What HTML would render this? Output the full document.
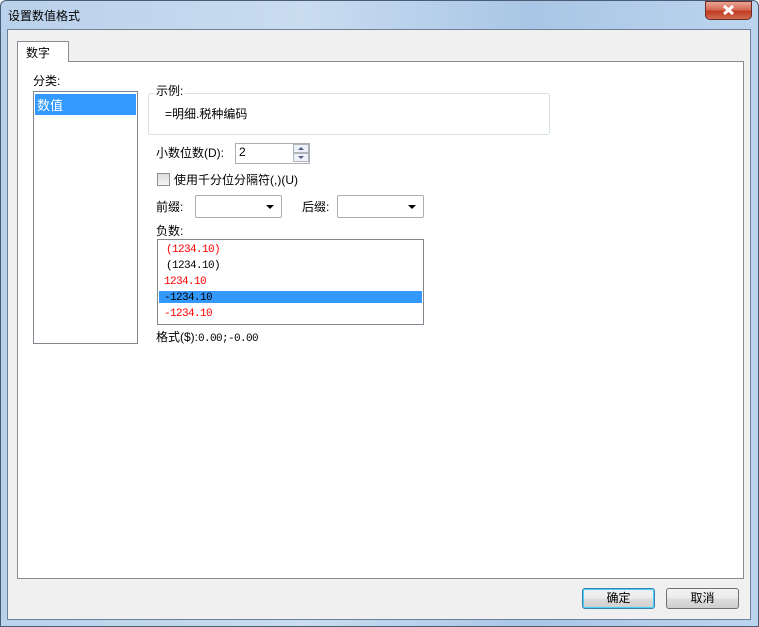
<!DOCTYPE html>
<html><head><meta charset="utf-8"><style>
*{margin:0;padding:0;box-sizing:border-box}
body{width:759px;height:627px;overflow:hidden;font:12px "Liberation Sans","Noto Sans CJK SC",sans-serif;color:#000;background:#fff;position:relative}
.a{position:absolute}
.m{font-family:"Liberation Mono","Noto Sans CJK SC",monospace;font-size:11px;letter-spacing:-0.6px}
.win{left:0;top:0;width:759px;height:627px;border-radius:6px 6px 0 0;background:linear-gradient(90deg,#b9d1ea 0%,#c9dcf0 40%,#a9c6e6 70%,#bcd4ee 100%);border:1px solid #4a5d75}
.client{left:7px;top:29px;width:744px;height:591px;background:#f0f0f0;border:1px solid #6e8199}
.panel{left:17px;top:61px;width:727px;height:518px;background:#fff;border:1px solid #898c95}
.tab{left:17px;top:41px;width:52px;height:21px;background:#fff;border:1px solid #898c95;border-bottom:none;padding:2px 0 0 8px}
.btn{height:21px;border:1px solid #707070;border-radius:3px;background:linear-gradient(#f2f2f2 0%,#ebebeb 50%,#dddddd 51%,#cfcfcf 100%);text-align:center;line-height:19px}
.combo{height:23px;border:1px solid #abadb3;background:#fff;border-radius:2px}
.arrow{position:absolute;right:7px;top:9px;width:0;height:0;border-left:4px solid transparent;border-right:4px solid transparent;border-top:4px solid #000}
.red{color:#f00}
</style></head><body>
<div class="a win"></div>
<div class="a" style="left:8px;top:7px;font-size:12px">设置数值格式</div>
<div class="a" style="left:705px;top:1px;width:47px;height:19px;border:1px solid #6b2a23;border-radius:0 0 5px 5px;background:linear-gradient(#e7a596,#d56a55 45%,#c23a22 55%,#cf6d4f)"><svg width="47" height="19" style="position:absolute;left:-1px;top:-1px"><path d="M19 5 L28 13 M28 5 L19 13" stroke="#fff" stroke-width="3" fill="none"/></svg></div>
<div class="a client"></div>
<div class="a panel"></div>
<div class="a tab">数字</div>
<div class="a" style="left:33px;top:72px">分类:</div>
<div class="a" style="left:33px;top:91px;width:105px;height:253px;border:1px solid #828790;background:#fff"></div>
<div class="a" style="left:35px;top:94px;width:101px;height:21px;background:#3399ff;color:#fff;padding:1px 0 0 2px;font-size:13px">数值</div>
<div class="a" style="left:148px;top:93px;width:402px;height:42px;border:1px solid #d5dfe5;border-radius:3px"></div>
<div class="a" style="left:154px;top:82px;background:#fff;padding:0 2px">示例:</div>
<div class="a" style="left:165px;top:105px">=明细.税种编码</div>
<div class="a" style="left:156px;top:144px">小数位数(D):</div>
<div class="a" style="left:235px;top:143px;width:75px;height:21px;border:1px solid #abadb3;background:#fff;padding:1px 0 0 3px">2</div>
<div class="a" style="left:293px;top:144px;width:16px;height:9px;border:1px solid #b0b4bc;background:#eef2f8"><div style="margin:2px auto 0;width:0;height:0;border-left:3px solid transparent;border-right:3px solid transparent;border-bottom:3px solid #4d6185"></div></div>
<div class="a" style="left:293px;top:153px;width:16px;height:9px;border:1px solid #b0b4bc;background:#eef2f8"><div style="margin:2px auto 0;width:0;height:0;border-left:3px solid transparent;border-right:3px solid transparent;border-top:3px solid #4d6185"></div></div>
<div class="a" style="left:157px;top:173px;width:13px;height:13px;border:1px solid #8f8f8f;background:linear-gradient(#dcdcdc,#f6f6f6)"></div>
<div class="a" style="left:174px;top:171px">使用千分位分隔符(,)(U)</div>
<div class="a" style="left:156px;top:198px">前缀:</div>
<div class="a combo" style="left:195px;top:195px;width:87px"><div class="arrow"></div></div>
<div class="a" style="left:302px;top:198px">后缀:</div>
<div class="a combo" style="left:337px;top:195px;width:87px"><div class="arrow"></div></div>
<div class="a" style="left:156px;top:222px">负数:</div>
<div class="a" style="left:157px;top:239px;width:267px;height:86px;border:1px solid #828790;background:#fff"></div>
<div class="a red m" style="left:166px;top:244px">(1234.10)</div>
<div class="a m" style="left:166px;top:260px">(1234.10)</div>
<div class="a red m" style="left:164px;top:276px">1234.10</div>
<div class="a" style="left:159px;top:291px;width:263px;height:12px;background:#3399ff"></div>
<div class="a m" style="left:164px;top:292px">-1234.10</div>
<div class="a red m" style="left:164px;top:308px">-1234.10</div>
<div class="a" style="left:156px;top:328px">格式($):<span class="m">0.00;-0.00</span></div>
<div class="a btn" style="left:582px;top:588px;width:73px;border-color:#3c7fb1;box-shadow:inset 0 0 0 1px #48d0f6">确定</div>
<div class="a btn" style="left:666px;top:588px;width:73px">取消</div>
</body></html>
